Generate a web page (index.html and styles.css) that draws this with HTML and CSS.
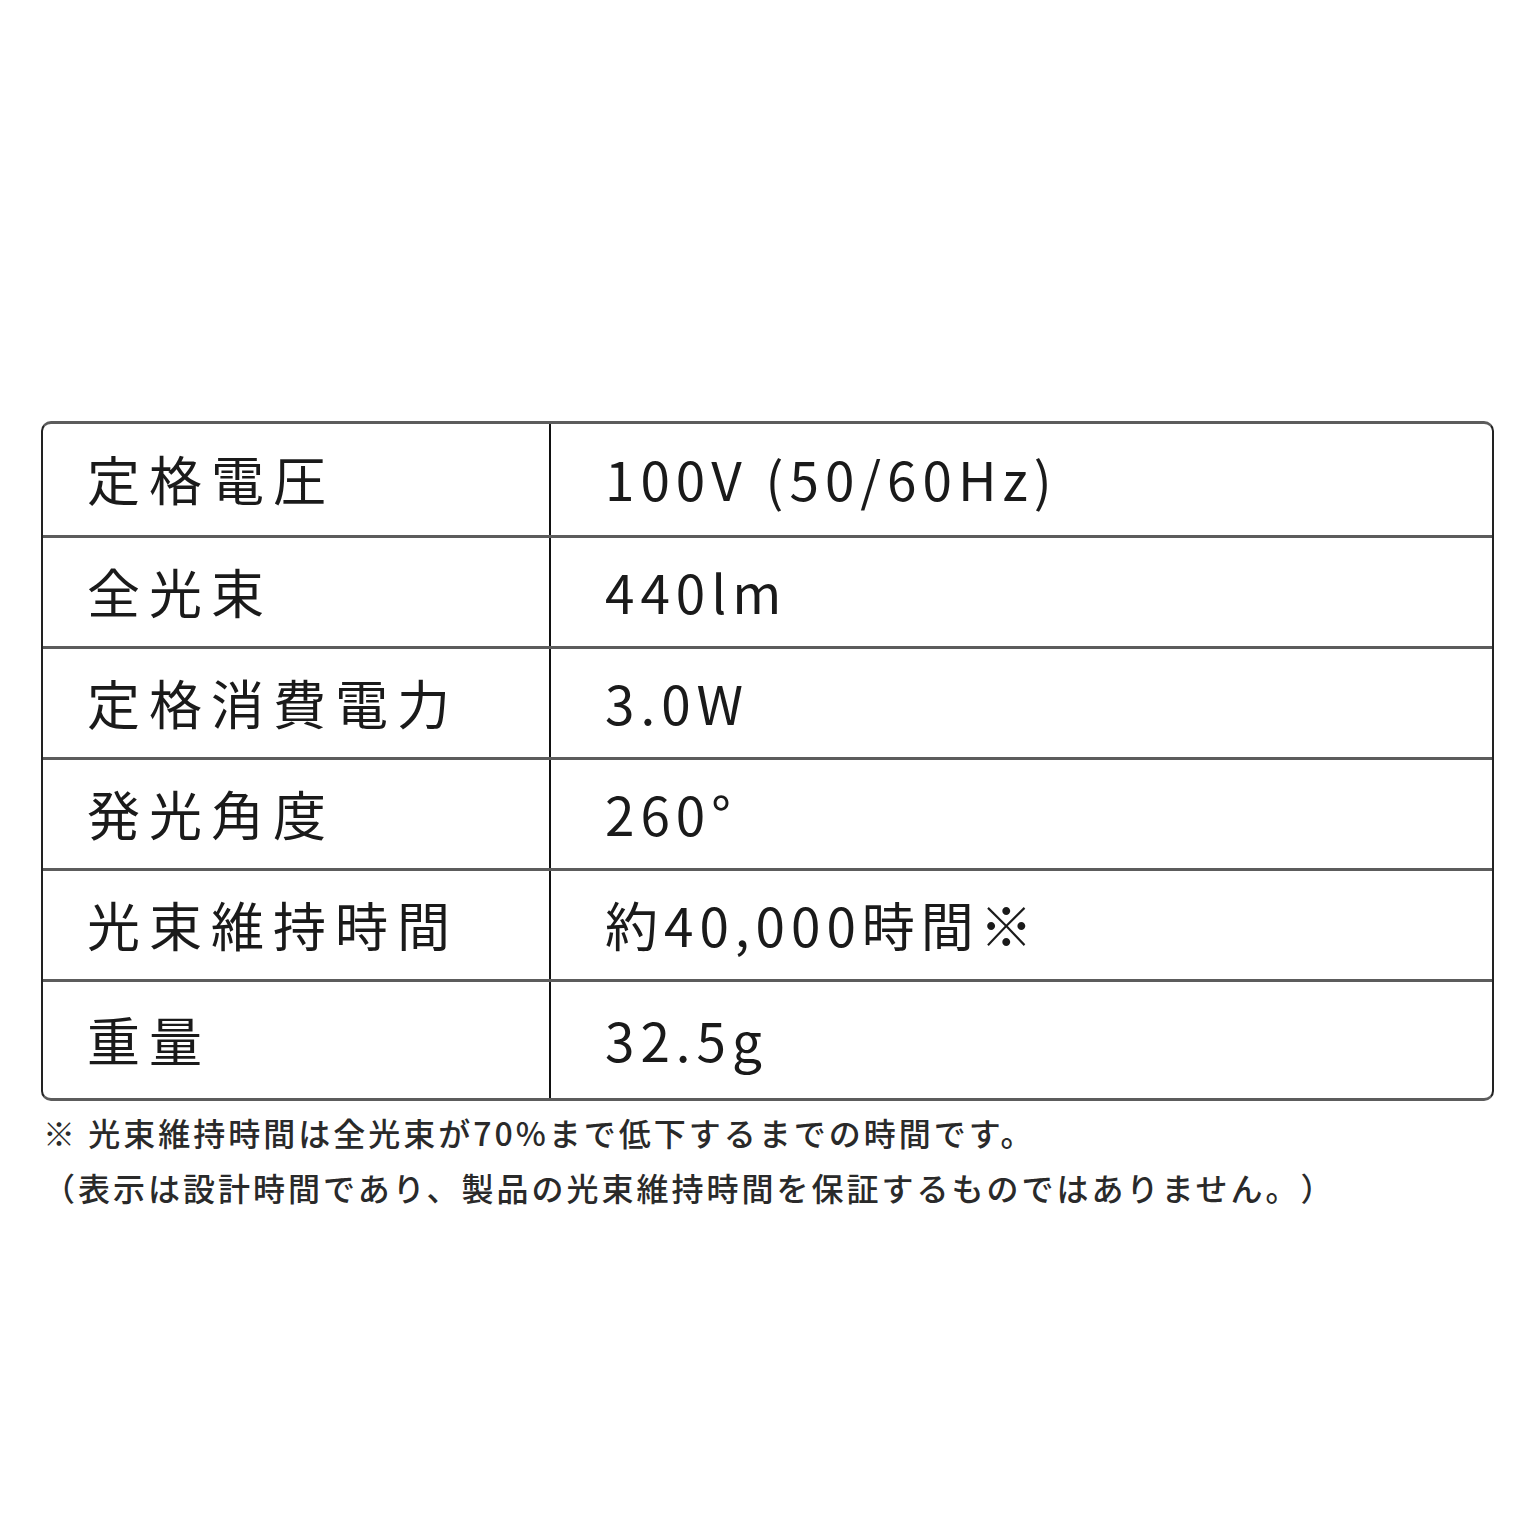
FILE: index.html
```html
<!DOCTYPE html>
<html lang="ja">
<head>
<meta charset="utf-8">
<title>仕様</title>
<link rel="stylesheet" href="styles.css">
</head>
<body>
<main class="page">
  <div class="spec">
    <div class="row row-first"><div class="label">定格電圧</div><div class="value">100V (50/60Hz)</div></div>
    <div class="row"><div class="label">全光束</div><div class="value">440lm</div></div>
    <div class="row"><div class="label">定格消費電力</div><div class="value">3.0W</div></div>
    <div class="row"><div class="label">発光角度</div><div class="value">260°</div></div>
    <div class="row"><div class="label">光束維持時間</div><div class="value">約40,000時間※</div></div>
    <div class="row row-last"><div class="label">重量</div><div class="value">32.5g</div></div>
  </div>
  <div class="notes">
    <p class="note">※ 光束維持時間は全光束が70%まで低下するまでの時間です。</p>
    <p class="note">（表示は設計時間であり、製品の光束維持時間を保証するものではありません。）</p>
  </div>
</main>
</body>
</html>
```

FILE: styles.css
```css
html, body {
  margin: 0;
  padding: 0;
  background: #ffffff;
}

body {
  width: 1536px;
  height: 1536px;
  font-family: "Noto Sans CJK JP", "Noto Sans", sans-serif;
  color: #1a1a1a;
  text-spacing-trim: space-all;
}

.page {
  padding: 421px 42px 0 41px;
}

.spec {
  border-top: 3px solid #5c5c5c;
  border-bottom: 3px solid #5c5c5c;
  border-left: 2px solid #222;
  border-right: 2px solid #222;
  border-radius: 10px;
  overflow: hidden;
}

.row {
  display: grid;
  grid-template-columns: 508px 1fr;
  height: 108px;
  border-top: 3px solid #5c5c5c;
}

.row-first {
  border-top: none;
  height: 111px;
}

.row-last {
  height: 116px;
}

.label,
.value {
  display: flex;
  align-items: center;
  font-size: 53px;
  font-weight: 400;
  line-height: 1;
  padding-bottom: 2px;
}

.label {
  padding-left: 44px;
  letter-spacing: 9px;
  border-right: 2px solid #111;
}

.value {
  padding-left: 54px;
  letter-spacing: 6px;
}

.notes {
  padding-top: 4px;
  padding-left: 2px;
}

.note {
  margin: 0;
  font-size: 32px;
  font-weight: 500;
  letter-spacing: 3px;
  line-height: 55px;
  color: #2a2a2a;
  white-space: nowrap;
}
```
